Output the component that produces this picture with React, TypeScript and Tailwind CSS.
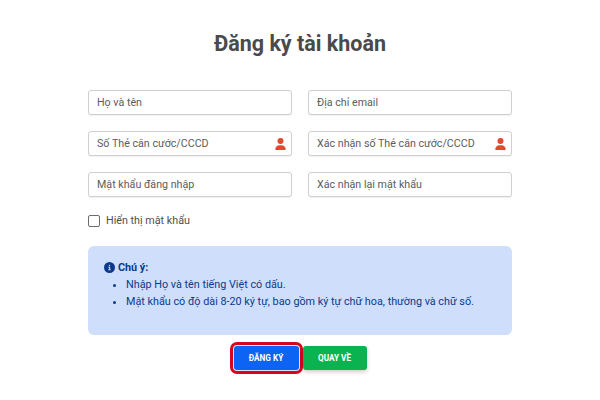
const UserIcon = () => (
  <svg viewBox="0 0 448 512" className="w-[11px] h-[12px] fill-[#e2492f] shrink-0">
    <path d="M224 256a128 128 0 1 0 0-256 128 128 0 1 0 0 256zm-45.7 48C79.8 304 0 383.8 0 482.3 0 498.7 13.3 512 29.7 512h388.6c16.4 0 29.7-13.3 29.7-29.7C448 383.8 368.2 304 269.7 304h-91.4z" />
  </svg>
);

const InfoIcon = () => (
  <svg viewBox="0 0 512 512" className="w-[11px] h-[11px] fill-[#0b3a8c] shrink-0">
    <path d="M256 512a256 256 0 1 0 0-512 256 256 0 1 0 0 512zm-40-176h24v-64h-24c-13.300 0-24-10.700-24-24s10.700-24 24-24h48c13.300 0 24 10.700 24 24v88h8c13.300 0 24 10.700 24 24s-10.700 24-24 24h-80c-13.300 0-24-10.700-24-24s10.700-24 24-24zm40-208a32 32 0 1 1 0 64 32 32 0 1 1 0-64z" />
  </svg>
);

interface FieldProps {
  label: string;
  icon?: boolean;
}

const Field = ({ label, icon = false }: FieldProps) => (
  <div className="h-[25px] flex items-center justify-between pl-2 pr-[5px] border border-[#cfcfcf] rounded-[3px] bg-white shadow-[0_1px_1px_rgba(0,0,0,0.06)]">
    <span className="text-[10.7px] text-[#5c5c5c] pt-[2px]">{label}</span>
    {icon && <UserIcon />}
  </div>
);

export default function App() {
  return (
    <div className="w-[600px] h-[400px] bg-white flex flex-col font-['Roboto',sans-serif] overflow-hidden">
      {/* Title */}
      <h1 className="text-center text-[21.5px] leading-[28px] font-bold text-[#4a4a4a] mt-[30px]">
        Đăng ký tài khoản
      </h1>

      <div className="mx-[88px] mt-[32px]">
        {/* Fields */}
        <div className="grid grid-cols-2 gap-x-[16px] gap-y-[16px]">
          <Field label="Họ và tên" />
          <Field label="Địa chỉ email" />
          <Field label="Số Thẻ căn cước/CCCD" icon />
          <Field label="Xác nhận số Thẻ căn cước/CCCD" icon />
          <Field label="Mật khẩu đăng nhập" />
          <Field label="Xác nhận lại mật khẩu" />
        </div>

        {/* Show password */}
        <div className="flex items-center gap-[6px] mt-[17px] h-[13px]">
          <div className="w-[12px] h-[12px] border-[1.5px] border-[#6b6b6b] rounded-[2px] bg-white" />
          <span className="text-[10.75px] text-[#4f4f4f] pt-[2px]">Hiển thị mật khẩu</span>
        </div>

        {/* Note */}
        <div className="mt-[19px] h-[89px] rounded-[6px] bg-[#cfdefb] pt-[13px] pl-[16px] text-[10.8px] leading-[17px] text-[#0b3a8c]">
          <div className="flex items-center gap-[3px] font-bold">
            <InfoIcon />
            <span>Chú ý:</span>
          </div>
          <ul className="list-disc pl-[22px]">
            <li>Nhập Họ và tên tiếng Việt có dấu.</li>
            <li>Mật khẩu có độ dài 8-20 ký tự, bao gồm ký tự chữ hoa, thường và chữ số.</li>
          </ul>
        </div>

        {/* Buttons */}
        <div className="flex justify-center items-center mt-[7px] pr-[4px]">
          <div className="rounded-[7px] border-[3px] border-[#d7061c] p-px bg-[#dbe6fb]">
            <button type="button" className="block w-[65px] h-[24px] rounded-[3px] bg-[#0d63f3] text-white text-[8.2px] font-bold">
              ĐĂNG KÝ
            </button>
          </div>
          <button type="button" className="w-[64px] h-[24px] rounded-[3px] bg-[#0ab34f] text-white text-[8.2px] font-bold shadow-[0_2px_4px_rgba(0,0,0,0.2)]">
            QUAY VỀ
          </button>
        </div>
      </div>
    </div>
  );
}
